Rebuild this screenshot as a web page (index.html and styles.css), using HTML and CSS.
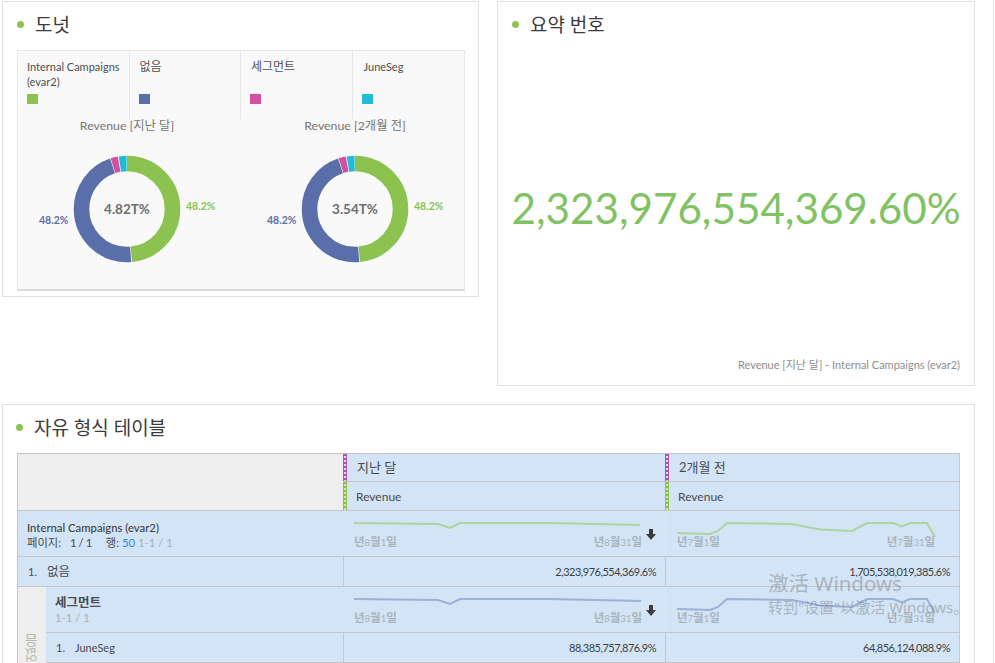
FILE: index.html
```html
<!DOCTYPE html>
<html lang="ko">
<head>
    <meta charset="UTF-8">
    <title>Workspace</title>
    <link rel="stylesheet" href="styles.css">
</head>
<body>
<div class="page">
    <div class="top-row">
        <section class="panel panel-donut">
            <h2 class="panel-title">도넛</h2>
            <div class="donut-box">
                <div class="legend">
                    <div class="legend-item">
                        <div class="legend-name">Internal Campaigns (evar2)</div>
                        <span class="swatch swatch-green"></span>
                    </div>
                    <div class="legend-item">
                        <div class="legend-name ko">없음</div>
                        <span class="swatch swatch-blue"></span>
                    </div>
                    <div class="legend-item">
                        <div class="legend-name ko">세그먼트</div>
                        <span class="swatch swatch-pink"></span>
                    </div>
                    <div class="legend-item">
                        <div class="legend-name latin">JuneSeg</div>
                        <span class="swatch swatch-cyan"></span>
                    </div>
                </div>
                <div class="charts">
                    <div class="chart">
                        <div class="chart-title">Revenue [지난 달]</div>
                        <svg class="donut" width="228" height="130" viewBox="0 0 228 130">
                            <g fill="none" stroke-width="15.5" transform="rotate(-90 114 72)">
                                <circle cx="114" cy="72" r="45.5" stroke="#8cc350" pathLength="360" stroke-dasharray="174.5 360"/>
                                <circle cx="114" cy="72" r="45.5" stroke="#5a6ea9" pathLength="360" stroke-dasharray="166 360" stroke-dashoffset="-175.3"/>
                                <circle cx="114" cy="72" r="45.5" stroke="#d34fa4" pathLength="360" stroke-dasharray="8 360" stroke-dashoffset="-342"/>
                                <circle cx="114" cy="72" r="45.5" stroke="#1fbcd6" pathLength="360" stroke-dasharray="8.5 360" stroke-dashoffset="-351"/>
                            </g>
                            <text class="donut-total" x="114" y="77" text-anchor="middle">4.82T%</text>
                            <text class="donut-pct pct-green" x="173" y="73">48.2%</text>
                            <text class="donut-pct pct-blue" x="26" y="87">48.2%</text>
                        </svg>
                    </div>
                    <div class="chart">
                        <div class="chart-title">Revenue [2개월 전]</div>
                        <svg class="donut" width="228" height="130" viewBox="0 0 228 130">
                            <g fill="none" stroke-width="15.5" transform="rotate(-90 114 72)">
                                <circle cx="114" cy="72" r="45.5" stroke="#8cc350" pathLength="360" stroke-dasharray="174.5 360"/>
                                <circle cx="114" cy="72" r="45.5" stroke="#5a6ea9" pathLength="360" stroke-dasharray="166 360" stroke-dashoffset="-175.3"/>
                                <circle cx="114" cy="72" r="45.5" stroke="#d34fa4" pathLength="360" stroke-dasharray="8 360" stroke-dashoffset="-342"/>
                                <circle cx="114" cy="72" r="45.5" stroke="#1fbcd6" pathLength="360" stroke-dasharray="8.5 360" stroke-dashoffset="-351"/>
                            </g>
                            <text class="donut-total" x="114" y="77" text-anchor="middle">3.54T%</text>
                            <text class="donut-pct pct-green" x="173" y="73">48.2%</text>
                            <text class="donut-pct pct-blue" x="26" y="87">48.2%</text>
                        </svg>
                    </div>
                </div>
            </div>
        </section>
        <section class="panel panel-summary">
            <h2 class="panel-title">요약 번호</h2>
            <div class="summary-number">2,323,976,554,369.60%</div>
            <div class="summary-caption">Revenue [지난 달] - Internal Campaigns (evar2)</div>
        </section>
    </div>

    <section class="panel panel-table">
        <h2 class="panel-title">자유 형식 테이블</h2>
        <div class="table">
            <div class="table-head">
                <div class="head-blank"></div>
                <div class="head-cols">
                    <div class="row row-head1">
                        <div class="cell cell-col cell-head head-ko bar-purple">지난 달</div>
                        <div class="cell cell-col2 cell-head head-ko bar-purple">2개월 전</div>
                    </div>
                    <div class="row row-head2">
                        <div class="cell cell-col cell-head bar-green">Revenue</div>
                        <div class="cell cell-col2 cell-head bar-green">Revenue</div>
                    </div>
                </div>
            </div>
            <div class="row row-dim">
                <div class="cell cell-first dim-name">
                    <div class="dim-title">Internal Campaigns (evar2)</div>
                    <div class="dim-pager">페이지: <span class="pager-gap">1 / 1</span> 행: <a class="rows-link">50</a> <span class="muted">1-1 / 1</span></div>
                </div>
                <div class="cell cell-col cell-spark no-line">
                    <svg class="spark" width="300" height="18" viewBox="0 0 300 18"><polyline class="line-green" points="0,4 84,5 96,9 106,4 196,4 286,6"/></svg>
                    <div class="spark-dates"><span>년<small>8</small>월<small>1</small>일</span><span>년<small>8</small>월<small>31</small>일</span></div>
                    <svg class="sort-arrow" width="10" height="11" viewBox="0 0 10 11"><path d="M3 0h4v5h3l-5 6-5-6h3z"/></svg>
                </div>
                <div class="cell cell-col2 cell-spark faint-line">
                    <svg class="spark" width="280" height="18" viewBox="0 0 280 18"><polyline class="line-green" points="1,14 34,15 42,12 51,4 116,5 144,10.5 176,12 191,4 217,4 226,7.5 234,4 251,4 259,18"/></svg>
                    <div class="spark-dates spark-dates2"><span>년<small>7</small>월<small>1</small>일</span><span>년<small>7</small>월<small>31</small>일</span></div>
                </div>
            </div>
            <div class="row row-value">
                <div class="cell cell-first item-name"><span class="item-num">1.</span><span class="item-ko">없음</span></div>
                <div class="cell cell-col cell-value">2,323,976,554,369.6%</div>
                <div class="cell cell-col2 cell-value">1,705,538,019,385.6%</div>
            </div>
            <div class="breakdown">
                <div class="side-label"><span>없음</span></div>
                <div class="breakdown-rows">
                    <div class="row row-dim">
                        <div class="cell cell-first2 dim-name seg-name">
                            <div class="seg-title">세그먼트</div>
                            <div class="muted">1-1 / 1</div>
                        </div>
                        <div class="cell cell-col cell-spark no-line">
                            <svg class="spark" width="300" height="18" viewBox="0 0 300 18"><polyline class="line-blue" points="0,4 84,5 96,9 106,4 196,4 287,6"/></svg>
                            <div class="spark-dates"><span>년<small>8</small>월<small>1</small>일</span><span>년<small>8</small>월<small>31</small>일</span></div>
                            <svg class="sort-arrow" width="10" height="11" viewBox="0 0 10 11"><path d="M3 0h4v5h3l-5 6-5-6h3z"/></svg>
                        </div>
                        <div class="cell cell-col2 cell-spark faint-line">
                            <svg class="spark" width="280" height="18" viewBox="0 0 280 18"><polyline class="line-blue" points="1,14 34,15 42,12 51,4 116,5 144,10.5 176,12 191,4 217,4 226,7.5 234,4 251,4 259,18"/></svg>
                            <div class="spark-dates spark-dates2"><span>년<small>7</small>월<small>1</small>일</span><span>년<small>7</small>월<small>31</small>일</span></div>
                        </div>
                    </div>
                    <div class="row row-value">
                        <div class="cell cell-first2 item-name"><span class="item-num">1.</span>JuneSeg</div>
                        <div class="cell cell-col cell-value">88,385,757,876.9%</div>
                        <div class="cell cell-col2 cell-value">64,856,124,088.9%</div>
                    </div>
                </div>
            </div>
        </div>
    </section>
</div>
<div class="scroll-line"></div>
<div class="watermark">
    <div class="watermark-big">激活 Windows</div>
    <div class="watermark-small">转到"设置"以激活 Windows。</div>
</div>
</body>
</html>
```
FILE: styles.css
```css
html, body {
    margin: 0;
    height: 663px;
    overflow: hidden;
    background: #fff;
}
body {
    position: relative;
    font-family: "Lato", "Noto Sans CJK KR", sans-serif;
    color: #4b4b4b;
    font-size: 12px;
}
.page {
    box-sizing: border-box;
    width: 975px;
    height: 663px;
    overflow: hidden;
    padding: 1px 0 0 2px;
}
.top-row {
    display: flex;
    align-items: flex-start;
    gap: 18px;
}
.panel {
    box-sizing: border-box;
    border: 1px solid #e1e1e1;
    background: #fff;
}
.panel-donut {
    width: 477px;
    height: 296px;
}
.panel-summary {
    width: 478px;
    height: 385px;
    display: flex;
    flex-direction: column;
}
.panel-table {
    width: 973px;
    height: 300px;
    margin-top: 18px;
}
.panel-title {
    display: flex;
    align-items: center;
    margin: 0;
    padding: 10px 0 0 14px;
    height: 25px;
    font-size: 19px;
    font-weight: 400;
    line-height: 25px;
    color: #3c3c3c;
}
.panel-title::before {
    content: "";
    width: 7px;
    height: 7px;
    margin-right: 11px;
    border-radius: 50%;
    background: #8cc350;
}
.donut-box {
    box-sizing: border-box;
    height: 241px;
    margin: 13px 13px 0 14px;
    background: #f9f9f9;
    border: 1px solid #e7e7e7;
    border-bottom: 2px solid #dcdcdc;
}
.legend {
    display: flex;
    height: 68px;
}
.legend-item {
    box-sizing: border-box;
    width: 112px;
    padding: 8px 6px 0 9px;
    border-right: 1px solid #e7e7e7;
}
.legend-item:last-child {
    border-right: 0;
}
.legend-name {
    height: 32px;
    font-size: 11px;
    line-height: 15px;
    color: #505050;
}
.legend-name.ko {
    margin-left: 1px;
    font-size: 12px;
}
.legend-name.latin {
    margin-left: 2px;
}
.swatch {
    display: block;
    width: 11px;
    height: 10px;
    margin-top: 3px;
}
.swatch-green { background: #8cc350; }
.swatch-blue { background: #5a6ea9; }
.swatch-pink { background: #d34fa4; }
.swatch-cyan { background: #1fbcd6; }
.charts {
    display: flex;
    justify-content: center;
}
.chart {
    flex: none;
    width: 228px;
    text-align: center;
}
.chart-title {
    height: 13px;
    font-size: 12.3px;
    line-height: 13px;
    color: #747474;
}
.donut {
    display: block;
    margin-top: 5px;
}
.donut-total {
    font-size: 13.5px;
    font-weight: 700;
    fill: #6e6e6e;
}
.donut-pct {
    font-size: 10.5px;
    font-weight: 700;
}
.pct-green { fill: #8cc350; }
.pct-blue { fill: #5a6ea9; }
.summary-number {
    margin-top: 143px;
    text-align: center;
    font-size: 42.2px;
    line-height: 56px;
    color: #80c264;
}
.summary-caption {
    margin-top: auto;
    padding: 0 14px 13px 0;
    text-align: right;
    font-size: 11px;
    line-height: 14px;
    color: #8e8e8e;
}
.panel-table .panel-title {
    padding-left: 13px;
}
.table {
    margin: 13px 0 0 14px;
    width: 943px;
    border-top: 1px solid #c6c6c6;
    border-left: 1px solid #c6c6c6;
    border-right: 1px solid #c6c6c6;
    box-sizing: border-box;
}
.table-head {
    display: flex;
    border-bottom: 1px solid #c6c6c6;
}
.head-blank {
    flex: none;
    width: 325px;
    background: #eeeeee;
}
.head-cols {
    flex: none;
    width: 616px;
}
.row {
    display: flex;
    box-sizing: border-box;
    border-bottom: 1px solid #c6c6c6;
    background: #d2e4f5;
}
.row-head1 { height: 28px; }
.row-head2 { height: 28px; border-bottom: 0; }
.row-dim { height: 46px; }
.row-value { height: 30px; }
.cell {
    box-sizing: border-box;
    flex: none;
    position: relative;
}
.cell-first { width: 325px; }
.cell-first2 { width: 297px; }
.cell-col {
    width: 322px;
    border-left: 1px solid #c6c6c6;
}
.cell-col2 {
    width: 294px;
    border-left: 1px solid #c6c6c6;
}
.no-line { border-left-color: transparent; }
.faint-line { border-left-color: #e0e8ee; }
.cell-head {
    padding-left: 13px;
    border-left: 0;
    font-size: 12px;
    line-height: 29px;
    color: #4b4b4b;
}
.head-ko {
    padding-left: 14px;
    font-size: 13px;
    line-height: 27px;
}
/* grip dots on the coloured bar */
.cell-head::before {
    content: "";
    position: absolute;
    left: 0;
    top: 0;
    bottom: 0;
    width: 4px;
    background-image: linear-gradient(to bottom, #dcdcdc 2px, transparent 2px);
    background-size: 2px 4px;
    background-position: 1px 2px;
    background-repeat: repeat-y;
}
.bar-purple::before { background-color: #b254ae; }
.bar-green::before { background-color: #8cc33c; }
.dim-name {
    padding: 10px 0 0 9px;
    font-size: 11.3px;
    line-height: 14.5px;
}
.seg-name { padding-top: 9px; }
.dim-title { color: #3f3f3f; font-weight: 500; }
.dim-pager { color: #4b4b4b; }
.pager-gap { margin: 0 11px 0 6px; letter-spacing: -0.4px; }
.rows-link { color: #2d87d7; }
.muted { color: #a9b0b6; }
.seg-title {
    font-weight: 700;
    font-size: 12.5px;
    color: #4b4b4b;
}
.cell-spark { padding: 8px 0 0 10px; }
.spark {
    display: block;
    overflow: visible;
}
.spark polyline {
    fill: none;
    stroke-width: 2;
}
.line-green { stroke: #add5a0; }
.line-blue { stroke: #9db0d8; }
.spark-dates {
    display: flex;
    justify-content: space-between;
    width: 288px;
    margin-top: -2px;
    font-size: 11.5px;
    line-height: 14px;
    font-weight: 700;
    color: #a9b3bc;
}
.spark-dates small { font-size: 9.5px; font-weight: 400; }
.spark-dates2 { width: 258px; margin-left: 1px; }
.sort-arrow {
    position: absolute;
    left: 302px;
    top: 18px;
    fill: #3c3c3c;
}
.item-name {
    padding-left: 10px;
    font-size: 11px;
    line-height: 29px;
}
.item-num { margin-right: 10px; }
.item-ko { font-size: 12.5px; }
.cell-value {
    padding-right: 9px;
    text-align: right;
    font-size: 11px;
    letter-spacing: -0.5px;
    line-height: 29px;
    color: #3f3f3f;
}
.breakdown {
    display: flex;
}
.side-label {
    box-sizing: border-box;
    flex: none;
    width: 28px;
    height: 76px;
    padding-top: 47px;
    background: #eeeeee;
    text-align: center;
    color: #b4bcb0;
    font-size: 14px;
    line-height: 14px;
}
.side-label span {
    display: inline-block;
    writing-mode: vertical-rl;
    transform: rotate(180deg);
}
.breakdown-rows {
    flex: none;
    width: 913px;
}
.scroll-line {
    position: absolute;
    top: 0;
    left: 993px;
    width: 1px;
    height: 663px;
    background: #e6e6e6;
}
.watermark {
    position: absolute;
    left: 768px;
    top: 570px;
    color: rgba(110, 110, 110, 0.42);
    font-family: "Noto Sans", "Noto Sans CJK SC", sans-serif;
    white-space: nowrap;
}
.watermark-big {
    font-size: 20.5px;
    line-height: 26px;
}
.watermark-small {
    font-size: 15px;
    line-height: 22px;
}
```
